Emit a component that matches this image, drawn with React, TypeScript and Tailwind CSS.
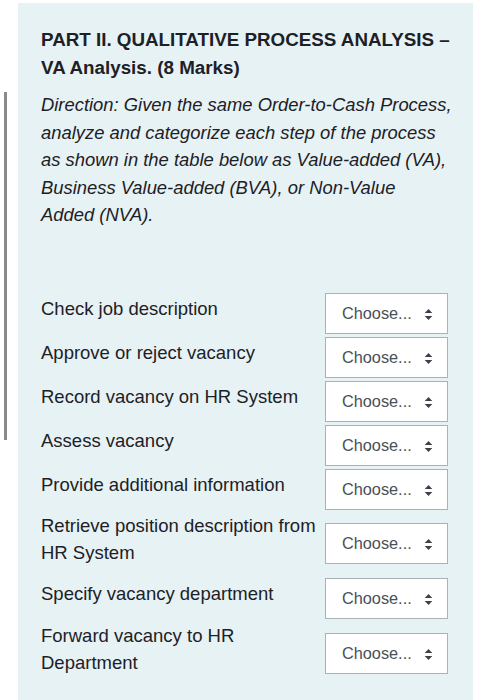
const steps: { label: string; h: string }[] = [
  { label: "Check job description", h: "h-[44px]" },
  { label: "Approve or reject vacancy", h: "h-[44px]" },
  { label: "Record vacancy on HR System", h: "h-[44px]" },
  { label: "Assess vacancy", h: "h-[44px]" },
  { label: "Provide additional information", h: "h-[44px]" },
  { label: "Retrieve position description from HR System", h: "h-[64px]" },
  { label: "Specify vacancy department", h: "h-[46px]" },
  { label: "Forward vacancy to HR Department", h: "h-[64px]" },
];

const ChooseSelect = () => (
  <div className="w-[123px] h-[41px] shrink-0 bg-white border border-[#a9b2b8] flex items-center pl-[16px] pr-[14px] justify-between">
    <span className="text-[16.3px] text-[#495057]">Choose...</span>
    <svg width="9" height="13" viewBox="0 0 9 13" className="mt-[1px]">
      <path d="M4.5 1 L8.3 5 H0.7 Z" fill="#3c4248" />
      <path d="M4.5 12 L8.3 8 H0.7 Z" fill="#3c4248" />
    </svg>
  </div>
);

export default function App() {
  return (
    <div
      className="relative bg-white w-[492px] h-[700px] overflow-hidden pt-[3px] pl-[18px]"
      style={{ fontFamily: '"Liberation Sans", Arial, sans-serif' }}
    >
      {/* scroll indicator */}
      <div className="absolute left-[4px] top-[92px] w-[3px] h-[348px] bg-[#8a8a8a]" />

      <div className="w-[455px] h-[720px] bg-[#e7f2f5] pl-[23px] pr-[10px] pt-[23px] text-[#1d2125]">
        <h2 className="font-bold text-[18.8px] leading-[28px] w-[410px]">
          PART II. QUALITATIVE PROCESS ANALYSIS – VA Analysis. (8 Marks)
        </h2>
        <p className="italic text-[18.4px] leading-[27.5px] mt-[9px] w-[416px]">
          Direction: Given the same Order-to-Cash Process, analyze and
          categorize each step of the process as shown in the table below as
          Value-added (VA), Business Value-added (BVA), or Non-Value
          <br />
          Added (NVA).
        </p>

        <div className="mt-[63px] flex flex-col">
          {steps.map((s) => (
            <div key={s.label} className={`flex items-center ${s.h}`}>
              <div className="w-[284px] pr-[4px] text-[18.5px] leading-[27.5px] pb-[9px]">
                {s.label}
              </div>
              <ChooseSelect />
            </div>
          ))}
        </div>
      </div>
    </div>
  );
}
